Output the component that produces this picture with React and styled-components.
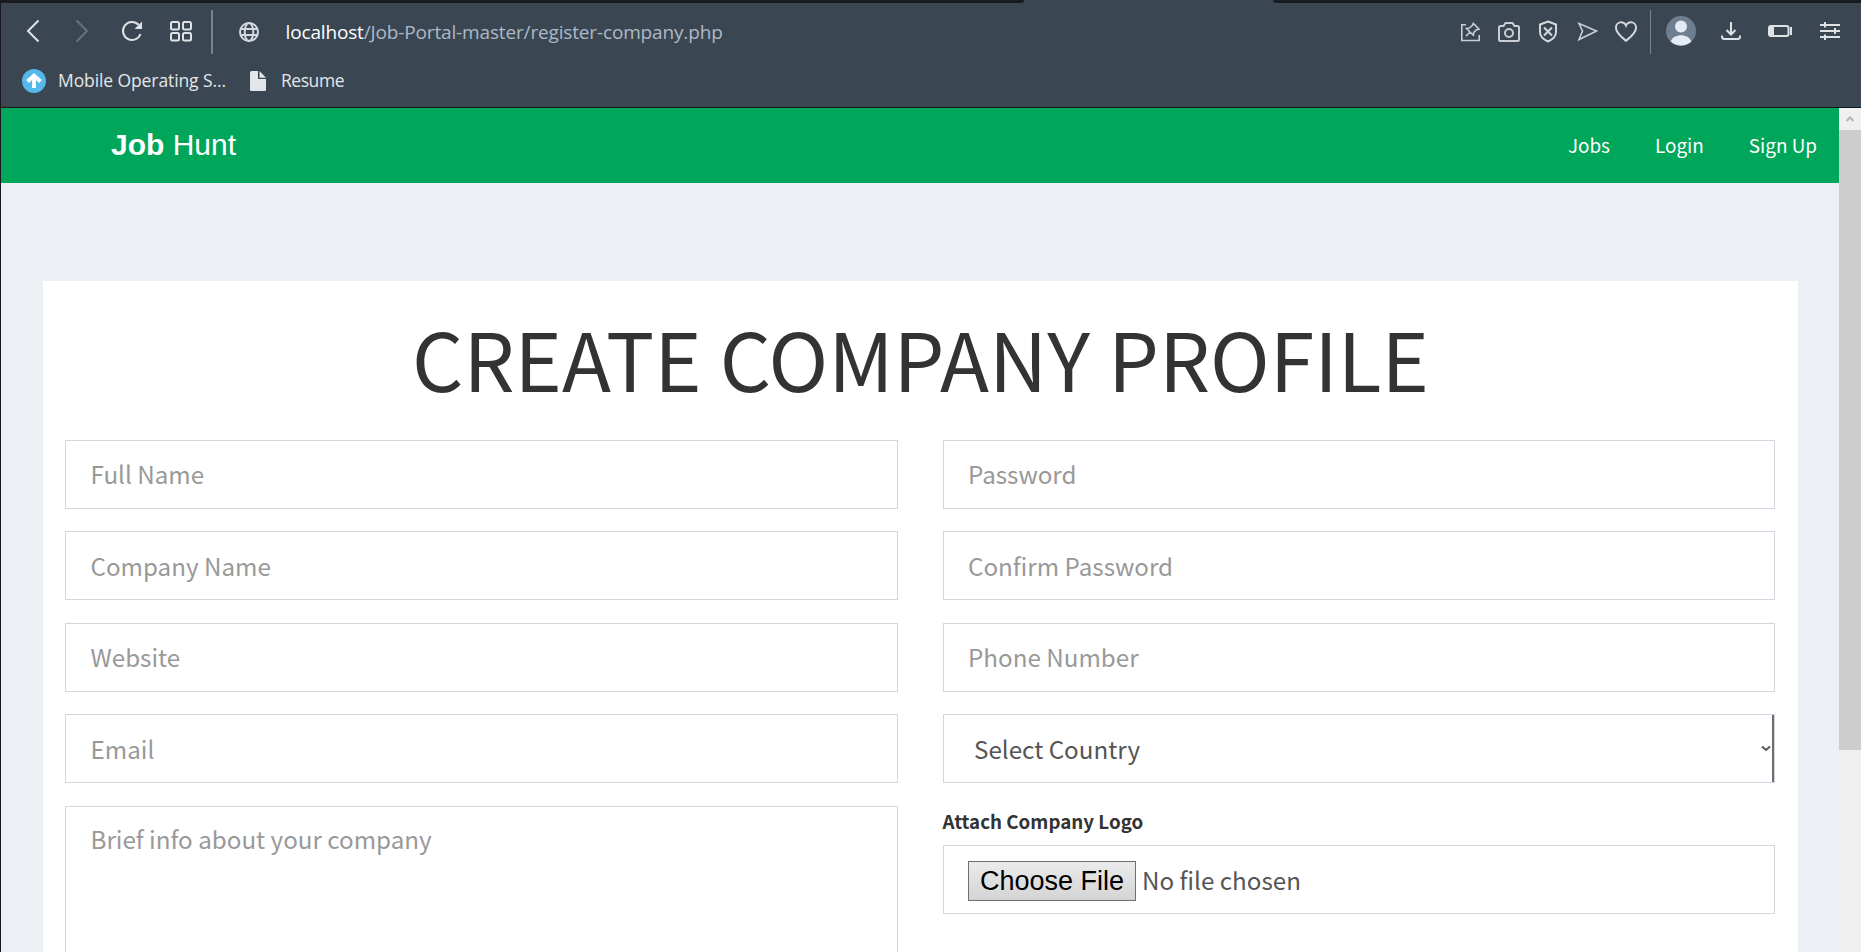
import React from "react";
import styled, { createGlobalStyle } from "styled-components";

const SANS = '"Noto Sans CJK SC", "Noto Sans", sans-serif';
const UI = '"Open Sans", "Noto Sans", sans-serif';
const ARIAL = '"Liberation Sans", Arial, sans-serif';

const GlobalStyle = createGlobalStyle`
  * { box-sizing: border-box; }
  html, body { margin: 0; padding: 0; height: 100%; overflow: hidden; }
  body { background: #ecf0f5; font-family: ${SANS}; }
`;

const Window = styled.div`
  display: flex;
  flex-direction: column;
  width: 1861px;
  height: 952px;
  overflow: hidden;
  border-left: 1px solid #17191e;
`;

const TabStrip = styled.div`
  display: flex;
  justify-content: space-between;
  flex: none;
  height: 3px;
  background: #3a4651;
`;

const TabStripEdge = styled.div`
  width: ${(p) => p.$width}px;
  background: #191b1f;
  border-radius: ${(p) => (p.$side === "left" ? "0 0 3px 0" : "0 0 0 3px")};
`;

const Chrome = styled.div`
  flex: none;
  height: 105px;
  background: #3a4651;
  border-bottom: 1px solid #14171b;
`;

const AddressBar = styled.div`
  display: flex;
  align-items: center;
  height: 56px;
  padding-right: 19px;
`;

const Icon = styled.svg`
  flex: none;
  display: block;
  margin-left: ${(p) => p.$gap || 0}px;
  margin-right: ${(p) => p.$end || 0}px;
  fill: none;
  stroke: ${(p) => p.$color || "#dfe2e5"};
  stroke-width: ${(p) => p.$stroke || 2};
`;

const Separator = styled.div`
  width: ${(p) => p.$width}px;
  height: 44px;
  margin-top: 2px;
  margin-left: ${(p) => p.$gap}px;
  background: #7a828b;
`;

const Url = styled.div`
  flex: 1;
  margin-left: 24.5px;
  padding-top: 2px;
  font: 19px/28px ${UI};
  letter-spacing: -0.15px;
  color: #adb9c6;
  white-space: nowrap;
  b { font-weight: 400; color: #fff; }
`;

const BookmarksBar = styled.div`
  display: flex;
  align-items: center;
  height: 44px;
`;

const Bookmark = styled.div`
  display: flex;
  align-items: center;
  margin-left: ${(p) => p.$gap}px;
  color: #e3e6e9;
  font: 17.5px/26px ${UI};
  white-space: nowrap;
`;

const BookmarkLabel = styled.span`
  margin-left: ${(p) => p.$gap}px;
  padding-bottom: 2px;
  width: ${(p) => p.$width}px;
  letter-spacing: ${(p) => p.$tracking || 0}px;
`;

const Viewport = styled.div`
  display: flex;
  flex: 1;
  min-height: 0;
`;

const Page = styled.div`
  flex: 1;
  min-width: 0;
  overflow: hidden;
  background: #ecf0f5;
`;

const Scrollbar = styled.div`
  display: flex;
  flex-direction: column;
  flex: none;
  width: 22px;
  background: #f0f0f0;
`;

const ScrollButton = styled.div`
  display: flex;
  align-items: center;
  justify-content: center;
  height: 22px;
`;

const ScrollThumb = styled.div`
  height: 620px;
  background: #cdcdcd;
`;

const Header = styled.header`
  display: flex;
  align-items: center;
  justify-content: space-between;
  height: 75px;
  padding: 0 22px 0 110px;
  background: #00a65a;
  color: #fff;
`;

const Brand = styled.div`
  padding-bottom: 2px;
  font: 30px/73px ${ARIAL};
  b { font-weight: 700; }
`;

const Nav = styled.nav`
  display: flex;
  gap: 45px;
  padding-bottom: 2px;
`;

const NavLink = styled.a`
  color: #fff;
  font-size: 18.9px;
  line-height: 30px;
`;

const Card = styled.section`
  width: 1755px;
  height: 900px;
  margin: 98px 0 0 42px;
  padding: 0 22px;
  background: #fff;
`;

const Title = styled.h1`
  margin: 0;
  height: 158.9px;
  padding-top: 17px;
  font-weight: 400;
  font-size: 80.5px;
  line-height: 118px;
  text-align: center;
  color: #333;
  white-space: nowrap;
`;

const Form = styled.form`
  display: grid;
  grid-template-columns: 832.5px 832.5px;
  column-gap: 45px;
`;

const Column = styled.div`
  display: flex;
  flex-direction: column;
  gap: 22.5px;
`;

const Field = styled.input`
  width: 100%;
  height: 69px;
  padding: 0 24.5px 1.4px;
  border: 1px solid #d2d6de;
  border-radius: 0;
  background: #fff;
  color: #555;
  font: 24.2px/36px ${SANS};
  outline: none;
  &::placeholder { color: #999; opacity: 1; }
`;

const Area = styled.textarea`
  display: block;
  width: 100%;
  height: 240px;
  padding: 13px 24.5px;
  border: 1px solid #d2d6de;
  background: #fff;
  font: 24.2px/38px ${SANS};
  resize: none;
  outline: none;
  overflow: hidden;
  &::placeholder { color: #999; opacity: 1; }
`;

const SelectBox = styled.div`
  display: flex;
  align-items: center;
  justify-content: space-between;
  height: 69px;
  padding: 0 0 0 30.5px;
  border: 1px solid #d2d6de;
  color: #555;
  font-size: 24.2px;
  line-height: 36px;
  box-shadow: inset -2px 0 0 #6d6d6d;
`;

const Upload = styled.div`
  display: flex;
  flex-direction: column;
`;

const Label = styled.label`
  height: 39px;
  font-weight: 700;
  font-size: 18.75px;
  line-height: 30px;
  color: #333;
`;

const FileBox = styled.div`
  display: flex;
  align-items: center;
  height: 69px;
  padding: 2px 24.5px 0;
  border: 1px solid #d2d6de;
  color: #555;
  font-size: 24.2px;
  line-height: 36px;
`;

const FileButton = styled.button`
  width: 168px;
  height: 40px;
  margin: 1px 6px 0 0;
  padding: 0;
  border: 1px solid #707070;
  border-radius: 0;
  background: linear-gradient(#ebebeb, #d4d4d4);
  color: #000;
  font: 27px/36px ${ARIAL};
  white-space: nowrap;
`;

function LeftIcons() {
  return (
    <>
      <Icon $gap={21} width="24" height="24"><path d="M16.5 1.5 6 12l10.500 10.500" /></Icon>
      <Icon $gap={24} $color="#69737e" width="24" height="24"><path d="M6.500 1.500 17 12 6.500 22.500" /></Icon>
      <Icon $gap={26} width="24" height="24">
        <path d="M20.500 15A9 9 0 1 1 18.600 5.800" />
        <path d="M22 2.500V10H14.500Z" fill="#dfe2e5" stroke="none" />
      </Icon>
      <Icon $gap={25} width="24" height="24">
        <rect x="2" y="3" width="8" height="7.500" rx="1.500" />
        <rect x="14" y="3" width="8" height="7.500" rx="1.500" />
        <rect x="2" y="14" width="8" height="7.500" rx="1.500" />
        <rect x="14" y="14" width="8" height="7.500" rx="1.500" />
      </Icon>
      <Separator $gap={18} $width={2} />
      <Icon $gap={24} $color="#d3d8dd" width="24" height="26">
        <circle cx="12" cy="14" r="9" />
        <ellipse cx="12" cy="14" rx="4.300" ry="9" />
        <path d="M3 11H21M3 17H21" />
      </Icon>
    </>
  );
}

function RightIcons() {
  return (
    <>
      <Icon $color="#c9ced3" $stroke={1.6} width="24" height="24">
        <path d="M7 5.800H2.800V21.500H20.200V16" />
        <path d="M14.300 4.300 20 10.200 17.500 10.800 14.800 13.500 14.300 16.200 7.500 9.500 10.300 9 13.300 6.500ZM11 13 7 17.200" />
      </Icon>
      <Icon $gap={14} $color="#c9ced3" width="24" height="24">
        <path d="M2 8.500Q2 7 3.500 7H6.500L8.500 4H15.500L17.500 7H20.500Q22 7 22 8.500V20.500Q22 22 20.500 22H3.500Q2 22 2 20.500Z" />
        <circle cx="12" cy="14" r="4" />
      </Icon>
      <Icon $gap={15} $color="#d3d8dd" width="24" height="26">
        <path d="M12 3.500 20 6.500V14Q20 20 12 23.500Q4 20 4 14V6.500Z" />
        <path d="M8 9.500 16 17.500M16 9.500 8 17.500" />
      </Icon>
      <Icon $gap={15} $color="#c9ced3" $stroke={1.6} width="24" height="24">
        <path d="M4 4.500 21.500 12 4 20.500 7.500 12Z" />
      </Icon>
      <Icon $gap={15} $color="#d3d8dd" width="24" height="24">
        <path d="M12 21.800C7.500 18 2 14 2 9A5.200 5.200 0 0 1 12 6.500A5.200 5.200 0 0 1 22 9C22 14 16.500 18 12 21.800Z" />
      </Icon>
      <Separator $gap={12} $width={1} />
      <Icon $gap={15} width="30" height="30" viewBox="0 0 30 30">
        <circle cx="15" cy="15" r="15" fill="#6e7f92" stroke="none" />
        <circle cx="15" cy="10.500" r="6" fill="#e4ebf5" stroke="none" />
        <path d="M4.700 25.500C7 17 23 17 25.300 25.500A15 15 0 0 1 4.700 25.500Z" fill="#e4ebf5" stroke="none" />
      </Icon>
      <Icon $gap={23} width="24" height="24">
        <path d="M12 3V15M7.500 11 12 15.500 16.500 11" />
        <path d="M3 16.500V17.500Q3 20 5.500 20H18.500Q21 20 21 17.500V16.500" />
      </Icon>
      <Icon $gap={25} width="26" height="24">
        <rect x="1" y="7" width="19.500" height="10" rx="2" />
        <path d="M1 8H6V16H1Z" fill="#dfe2e5" stroke="none" />
        <path d="M23 8V16" />
      </Icon>
      <Icon $gap={24} width="24" height="24">
        <path d="M2 6H22M2 12H22M2 18H22M7 3V8.500M17 9V15M7 15.500V21" />
      </Icon>
    </>
  );
}

export default function App() {
  return (
    <>
      <GlobalStyle />
      <Window>
        <TabStrip>
          <TabStripEdge $side="left" $width={1023} />
          <TabStripEdge $side="right" $width={588} />
        </TabStrip>
        <Chrome>
          <AddressBar>
            <LeftIcons />
            <Url><b>localhost</b>/Job-Portal-master/register-company.php</Url>
            <RightIcons />
          </AddressBar>
          <BookmarksBar>
            <Bookmark $gap={21}>
              <Icon width="24" height="24">
                <circle cx="12" cy="12" r="12" fill="#55b7ea" stroke="none" />
                <path d="M12 19V7M5.500 12.500 12 6.500 18.500 12.500" stroke="#fff" strokeWidth="3.800" />
              </Icon>
              <BookmarkLabel $gap={12} $width={191} $tracking={-0.1}>Mobile Operating S...</BookmarkLabel>
            </Bookmark>
            <Bookmark $gap={1}>
              <Icon width="16" height="20">
                <path d="M1.500 0H8V8H16V18.500Q16 20 14.500 20H1.500Q0 20 0 18.500V1.500Q0 0 1.500 0Z" fill="#e4e7ea" stroke="none" />
                <path d="M9.500 0 16 6.800H9.500Z" fill="#e4e7ea" stroke="none" />
              </Icon>
              <BookmarkLabel $gap={15} $tracking={-0.45}>Resume</BookmarkLabel>
            </Bookmark>
          </BookmarksBar>
        </Chrome>
        <Viewport>
          <Page>
            <Header>
              <Brand><b>Job</b> Hunt</Brand>
              <Nav>
                <NavLink>Jobs</NavLink>
                <NavLink>Login</NavLink>
                <NavLink>Sign Up</NavLink>
              </Nav>
            </Header>
            <Card>
              <Title>CREATE COMPANY PROFILE</Title>
              <Form>
                <Column>
                  <Field placeholder="Full Name" />
                  <Field placeholder="Company Name" />
                  <Field placeholder="Website" />
                  <Field placeholder="Email" />
                  <Area placeholder="Brief info about your company" />
                </Column>
                <Column>
                  <Field placeholder="Password" />
                  <Field placeholder="Confirm Password" />
                  <Field placeholder="Phone Number" />
                  <SelectBox>
                    Select Country
                    <Icon $color="#555" $end={2} width="12" height="8">
                      <path d="M2 1.500 6 5 10 1.500" />
                    </Icon>
                  </SelectBox>
                  <Upload>
                    <Label>Attach Company Logo</Label>
                    <FileBox>
                      <FileButton type="button">Choose File</FileButton>
                      No file chosen
                    </FileBox>
                  </Upload>
                </Column>
              </Form>
            </Card>
          </Page>
          <Scrollbar>
            <ScrollButton>
              <Icon $color="#b5b5b5" width="10" height="8"><path d="M1.500 6 5 2.500 8.500 6" /></Icon>
            </ScrollButton>
            <ScrollThumb />
          </Scrollbar>
        </Viewport>
      </Window>
    </>
  );
}
